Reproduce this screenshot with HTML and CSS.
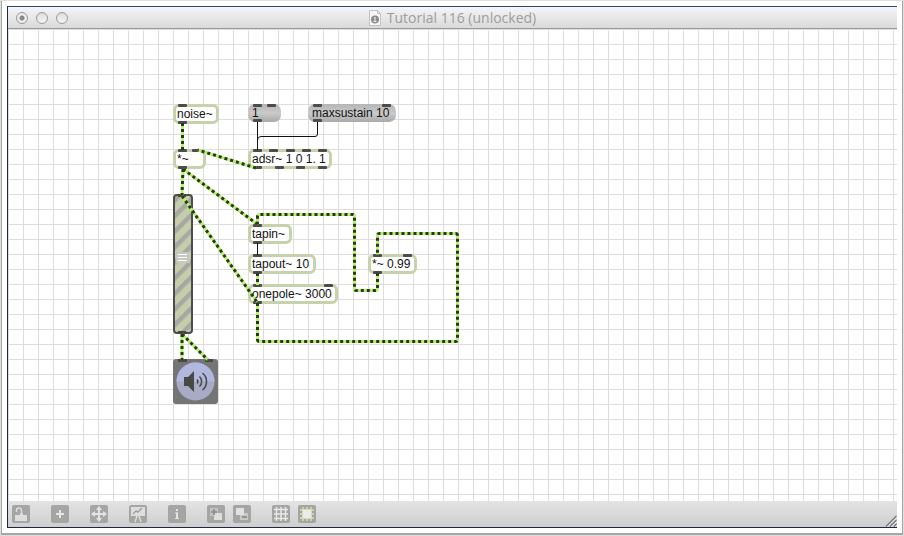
FILE: index.html
```html
<!DOCTYPE html>
<html lang="en">
<head>
<meta charset="utf-8">
<title>Tutorial 116 (unlocked)</title>
<link rel="stylesheet" href="styles.css">
</head>
<body>
<div class="frame">
<main class="window">
  <header class="titlebar">
    <div class="lights">
      <button class="light edited" type="button" aria-label="Close"></button>
      <button class="light" type="button" aria-label="Minimize"></button>
      <button class="light" type="button" aria-label="Zoom"></button>
    </div>
    <h1 class="title">
      <svg class="doc" viewBox="0 0 12 16" aria-hidden="true">
        <path d="M.5.5h8l3 3v12H.5z" fill="#f6f6f6" stroke="#c2c2c2"/>
        <path d="M8.500 .5v3h3" fill="none" stroke="#c2c2c2"/>
        <circle cx="6" cy="9.500" r="4" fill="#8c8c8c"/>
        <path d="M5 8l1-1v4M4.500 11.500h3" fill="none" stroke="#eee"/>
      </svg>
      Tutorial 116 (unlocked)
    </h1>
  </header>

  <section class="patcher">
    <div class="box noise">noise~<span class="ports in"><i></i></span><span class="ports out"><i></i></span></div>
    <div class="box message one">1<span class="ports in"><i></i><i></i></span><span class="ports out"><i></i></span></div>
    <div class="box message sustain">maxsustain 10<span class="ports in"><i></i><i></i></span><span class="ports out"><i></i></span></div>
    <div class="box times">*~<span class="ports in"><i></i><i></i></span><span class="ports out"><i></i></span></div>
    <div class="box adsr">adsr~ 1 0 1. 1<span class="ports in"><i></i><i></i><i></i><i></i><i></i></span><span class="ports out"><i></i><i></i><i></i><i></i></span></div>
    <div class="box tapin">tapin~<span class="ports in"><i></i></span><span class="ports out"><i></i></span></div>
    <div class="box tapout">tapout~ 10<span class="ports in"><i></i></span><span class="ports out"><i></i></span></div>
    <div class="box onepole">onepole~ 3000<span class="ports in"><i></i><i></i></span><span class="ports out"><i></i></span></div>
    <div class="box feedback">*~ 0.99<span class="ports in"><i></i><i></i></span><span class="ports out"><i></i></span></div>

    <svg class="gain" viewBox="0 0 20 140" role="img" aria-label="Gain">
      <defs>
        <pattern id="stripes" width="11" height="11" patternUnits="userSpaceOnUse" patternTransform="translate(0 5) rotate(-45)">
          <rect width="11" height="11" fill="#c5cda9"/>
          <rect width="11" height="4.500" fill="#a6a8a4"/>
        </pattern>
      </defs>
      <rect x="1" y="1" width="18" height="138" rx="3" fill="url(#stripes)" stroke="#4c4d48" stroke-width="2"/>
      <rect x="3" y="58" width="14" height="11" fill="#c6c7c3"/>
      <path d="M5 60.500h9M5 63.500h9M5 66.500h9" stroke="#fff"/>
      <path d="M5 1.500h8M5 138.500h8" stroke="#444540" stroke-width="3"/>
    </svg>

    <button class="dac" type="button" aria-label="Audio output">
      <svg viewBox="0 0 45 45" aria-hidden="true">
        <rect width="45" height="45" rx="3" fill="#757575"/>
        <circle cx="22.500" cy="22.500" r="19" fill="#a9aac4"/>
        <path d="M3.500 22.500a19 19 0 0 1 38 0z" fill="#b0b9dd"/>
        <path d="M11 18h4l6-6v21l-6-6h-4z" fill="#474944"/>
        <path d="M24 20.500a3 3 0 0 1 0 4M26.500 17.500a7 7 0 0 1 0 10M29.500 14a11 11 0 0 1 0 17" fill="none" stroke="#474944" stroke-width="1.500"/>
        <path d="M5 1.500h9M32 1.500h8" stroke="#484848" stroke-width="3"/>
      </svg>
    </button>

    <svg class="cords" width="889" height="472" viewBox="8 29 889 472" aria-hidden="true">
      <defs>
        <g id="signals">
          <path d="M182.500 123v27"/>
          <path d="M256 168L198 150"/>
          <path d="M183 169L182 195"/>
          <path d="M183 169L257 224"/>
          <path d="M182 196L257 302"/>
          <path d="M182 334v26"/>
          <path d="M182 334L208 360"/>
          <path d="M257.500 273v12"/>
          <path d="M257.500 303v36.500q0 2 2 2h196q2 0 2-2v-104q0-2-2-2h-76q-2 0-2 2v19"/>
          <path d="M377.500 273v15.500q0 2-2 2h-19q-2 0-2-2v-72q0-2-2-2h-93q-2 0-2 2v8"/>
        </g>
      </defs>
      <path class="control" d="M257.500 122v28M317.500 122v12q0 2.500-2.500 2.500h-54q-3.500 0-3.500 3.500M257.500 243v12"/>
      <use href="#signals" class="glow"/>
      <use href="#signals" class="dots"/>
    </svg>
  </section>

  <footer class="toolbar">
    <button type="button" aria-label="Unlock"><svg viewBox="0 0 18 18"><path d="M3 10h5V8.500h3V10h4v6H3z" fill="#dedede"/><path d="M9.500 9.500V5.500a2.500 2.500 0 0 0-5 0V7" fill="none" stroke="#dedede" stroke-width="1.500"/></svg></button>
    <button type="button" aria-label="New object"><svg viewBox="0 0 18 18"><path d="M9 5v8M5 9h8" stroke="#e6e6e6" stroke-width="2"/></svg></button>
    <button type="button" aria-label="Pan"><svg viewBox="0 0 18 18"><path d="M9 3v12M3 9h12" stroke="#e4e4e4" stroke-width="2"/><path d="M9 1l3 4H6zM9 17l3-4H6zM1 9l4-3v6zM17 9l-4-3v6z" fill="#e4e4e4"/></svg></button>
    <button type="button" aria-label="Presentation"><svg viewBox="0 0 18 18"><path d="M2 2h14v9H2z" fill="#dedede"/><path d="M4 9l3-3 2 1 4-4" fill="none" stroke="#a3a4a1" stroke-width="1.500"/><path d="M8 11l-2 6M10 11l2 6" stroke="#dedede" stroke-width="1.500"/></svg></button>
    <button type="button" aria-label="Inspector"><svg viewBox="0 0 18 18"><path d="M9 4v2M9 7.500V14" stroke="#e4e4e4" stroke-width="2"/><path d="M7 8h2M7 13.500h4" stroke="#e4e4e4"/></svg></button>
    <span class="pair">
      <button type="button" aria-label="Bring to front"><svg viewBox="0 0 18 18"><path d="M3 3h8v8H3z" fill="#c4c5c2"/><path d="M7 8h8v7H7z" fill="#dedede"/><path d="M7 4v6M4 7h6" stroke="#92938f" stroke-width="2"/></svg></button>
      <button type="button" aria-label="Send to back"><svg viewBox="0 0 18 18"><path d="M7 8h8v7H7z" fill="#c8c9c6"/><path d="M9 12h5" stroke="#92938f" stroke-width="2"/><path d="M3 3h8v7H3z" fill="#e2e2e2"/></svg></button>
    </span>
    <span class="pair">
      <button type="button" aria-label="Grid"><svg viewBox="0 0 18 18"><path d="M4.500 2v14M9 2v14M13.500 2v14M2 4.500h14M2 9h14M2 13.500h14" stroke="#e8e8e8" stroke-width="1.500"/></svg></button>
      <button type="button" aria-label="Snap to grid"><svg viewBox="0 0 18 18"><path d="M5 2v14M9 2v14M13 2v14M2 5h14M2 9h14M2 13h14" stroke="#d3deb2" stroke-width="1.500"/><path d="M4 4h10v10H4z" fill="#d3deb2"/><path d="M5 5h8v8H5z" fill="#eaeaea"/></svg></button>
    </span>
    <svg class="grip" viewBox="0 0 12 12" aria-hidden="true"><path d="M2 12L12 2M6 12l6-6M10 12l2-2" stroke="#f2f2f2"/><path d="M1 11.500L11.500 1M5 11.500L11.500 5M9 11.500L11.500 9" stroke="#757575" stroke-width="1.300"/></svg>
  </footer>
</main>
</div>
</body>
</html>
```
FILE: styles.css
```css
* { box-sizing: border-box; }

body {
  margin: 0;
  height: 100vh;
  padding: 1px;
  background: #dfdfdf;
  font: 12px/14px "Liberation Sans", Arial, sans-serif;
  color: #111;
}

button { padding: 0; border: 0; background: none; }
svg { display: block; }

.frame {
  height: 100%;
  padding: 5px;
  background: #fff;
  border: solid #a5a7a5;
  border-width: 0 1px 2px;
}

.window {
  height: 100%;
  display: flex;
  flex-direction: column;
  border: solid #1c2740;
  border-width: 1px 0 1px 1px;
  border-top-color: #2b4a74;
}

.titlebar {
  flex: none;
  height: 22px;
  display: grid;
  grid-template-columns: 1fr auto 1fr;
  align-items: center;
  background: linear-gradient(#f5f5f5, #dadada);
  border-bottom: 1px solid #989898;
}

.lights { display: flex; gap: 8px; padding-left: 8px; }

.light {
  width: 12px;
  height: 12px;
  border: 1px solid #999;
  border-radius: 50%;
  background: linear-gradient(#dcdcdc, #f6f6f6);
}

.edited { background: radial-gradient(circle, #888 0 2px, #ececec 3px); }

.title {
  margin: 0;
  display: flex;
  align-items: center;
  gap: 6px;
  font: 14px/20px "Open Sans", "Noto Sans", sans-serif;
  color: #9c9c9c;
}

.doc { width: 12px; height: 16px; }

.patcher {
  flex: 1;
  min-height: 0;
  position: relative;
  overflow: hidden;
  background:
    linear-gradient(90deg, #dedede 1px, transparent 1px) 0 0 / 15px 15px,
    linear-gradient(#dedede 1px, transparent 1px) 0 0 / 15px 15px,
    #fff;
}

.box {
  position: absolute;
  height: 20px;
  padding-left: 1px;
  border: 3px solid #c5d2ac;
  border-radius: 6px;
  background: #fff;
  white-space: nowrap;
}

.message {
  height: 18px;
  padding: 2px 4px;
  border: 0;
  border-radius: 7px;
  background: linear-gradient(#b5b5b5, #cacaca 50%, #a9a9a9);
}

.ports {
  position: absolute;
  left: 2px;
  right: 2px;
  display: flex;
  justify-content: space-between;
}

.message .ports { left: 5px; right: 5px; }
.ports i { width: 9px; height: 3px; border-radius: 1px; background: #4c4c4a; }
.in { top: -3px; }
.out { bottom: -3px; }
.message .in { top: 0; }
.message .out { bottom: 0; }

.noise { left: 165px; top: 75px; width: 46px; }
.one { left: 240px; top: 75px; width: 33px; }
.sustain { left: 300px; top: 75px; width: 88px; }
.times { left: 165px; top: 120px; width: 33px; }
.adsr { left: 240px; top: 120px; width: 84px; }
.tapin { left: 240px; top: 195px; width: 44px; }
.tapout { left: 240px; top: 225px; width: 68px; }
.onepole { left: 240px; top: 255px; width: 90px; }
.feedback { left: 360px; top: 225px; width: 49px; }
.gain { position: absolute; left: 165px; top: 165px; width: 20px; height: 140px; }
.dac { position: absolute; left: 165px; top: 330px; width: 45px; height: 45px; }

.cords { position: absolute; left: 0; top: 0; pointer-events: none; }
.cords use { fill: none; stroke-width: 3px; }
.control { fill: none; stroke: #111; }
.glow { stroke: #b2f566; }
.dots { stroke: #2c3520; stroke-dasharray: 3 3; }

.toolbar {
  flex: none;
  height: 26px;
  display: flex;
  align-items: center;
  gap: 21px;
  padding-left: 4px;
  background: linear-gradient(#e4e4e4, #cecece);
}

.toolbar button {
  width: 18px;
  height: 18px;
  border-radius: 2px;
  background: #a5a6a3;
}

.pair { display: flex; gap: 8px; }
.grip { width: 12px; height: 12px; margin-left: auto; align-self: flex-end; }
```
